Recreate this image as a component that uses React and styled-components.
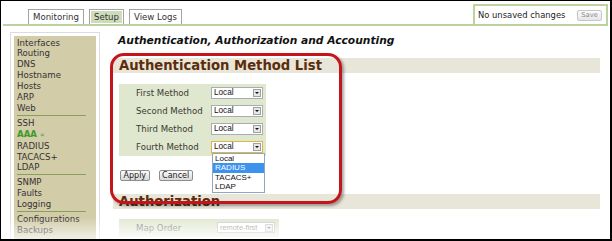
import React from "react";
import styled, { createGlobalStyle } from "styled-components";

const GlobalStyle = createGlobalStyle`
  html, body {
    margin: 0;
    padding: 0;
    background: #fff;
  }
`;

const Frame = styled.div`
  position: relative;
  width: 612px;
  height: 241px;
  box-sizing: border-box;
  border-style: solid;
  border-color: #000;
  border-width: 1px 2px 2px 1px;
  overflow: hidden;
  background: #fff;
  font-family: "DejaVu Sans", Verdana, sans-serif;
  color: #333;
`;

const TopBar = styled.div`
  display: flex;
  align-items: flex-end;
  height: 25px;
`;

const TabStrip = styled.div`
  flex: 1;
  display: flex;
  align-items: flex-end;
  gap: 5px;
  margin-left: 2px;
  padding-left: 25px;
  border-bottom: 2px solid #bcd2a0;
`;

const Tab = styled.div`
  height: 15px;
  box-sizing: border-box;
  padding: 0 4px;
  border: 1px solid #a3a3a3;
  border-bottom: none;
  box-shadow: inset 0 0 0 1px #fff;
  background: ${(p) => (p.$active ? "#cfdcbb" : "#fff")};
  font-size: 8.6px;
  line-height: 14px;
  color: #333;
`;

const StatusBox = styled.div`
  width: 135px;
  height: 22px;
  box-sizing: border-box;
  margin-right: 2px;
  border: 2px solid #bcd2a0;
  display: flex;
  align-items: center;
  justify-content: space-between;
  padding: 0 4px 0 3px;
  font-size: 8.4px;
  color: #222;
`;

const SaveButton = styled.div`
  width: 25px;
  height: 11px;
  box-sizing: border-box;
  border: 1px solid #c6c6c6;
  border-radius: 2px;
  background: linear-gradient(#fbfbfb, #e6e6e6);
  color: #8a8a8a;
  font-size: 6.8px;
  line-height: 9px;
  text-align: center;
`;

const Body = styled.div`
  display: flex;
  align-items: flex-start;
`;

const Sidebar = styled.div`
  flex-shrink: 0;
  width: 90px;
  height: 220px;
  box-sizing: border-box;
  margin: 6px 0 0 9px;
  padding: 3px 3px 0;
  border: 1px solid #dcdcdc;
`;

const SideInner = styled.div`
  height: 100%;
  background: #d2cca9;
  padding: 1.5px 0 0 3px;
`;

const SideGroup = styled.div`
  margin-right: 10px;
  padding-bottom: ${(p) => (p.$last ? 0 : 1)}px;
  margin-bottom: ${(p) => (p.$last ? 0 : 2)}px;
  border-bottom: ${(p) => (p.$last ? "none" : "1px solid #86a25a")};
`;

const SideItem = styled.div`
  font-size: 8.6px;
  line-height: 10.9px;
  white-space: nowrap;
  color: ${(p) => (p.$active ? "#3c9a2a" : "#333")};
  font-weight: ${(p) => (p.$active ? "bold" : "normal")};
`;

const Chevron = styled.span`
  font-size: 7.5px;
  margin-left: 3px;
  font-weight: normal;
`;

const Content = styled.div`
  width: 487px;
  margin-left: 13px;
`;

const PageTitle = styled.div`
  margin-top: 7.5px;
  padding-left: 5px;
  font-size: 10.7px;
  line-height: 14px;
  font-weight: bold;
  font-style: italic;
  color: #111;
  white-space: nowrap;
`;

const SectionBand = styled.div`
  margin-top: ${(p) => p.$top}px;
  height: 15px;
  padding-left: 6px;
  background: #e8e5d9;
  font-size: 13.2px;
  line-height: 15px;
  font-weight: bold;
  color: #5c2c0b;
  white-space: nowrap;
`;

const FormBox = styled.div`
  width: ${(p) => p.$width}px;
  box-sizing: border-box;
  margin: ${(p) => p.$top}px 0 0 6px;
  padding-left: 17px;
  background: ${(p) =>
    p.$faded ? "linear-gradient(#dfe7cf, #eef2e6)" : "#dfe7cf"};
`;

const Row = styled.div`
  display: flex;
  align-items: center;
  height: 18px;
`;

const Label = styled.div`
  width: ${(p) => p.$width}px;
  flex-shrink: 0;
  font-size: 8.6px;
  color: ${(p) => (p.$faded ? "#8e8e8e" : "#3a3a30")};
  white-space: nowrap;
`;

const SelectBox = styled.div`
  position: relative;
  width: ${(p) => p.$width}px;
  height: ${(p) => p.$height}px;
  box-sizing: border-box;
  display: flex;
  align-items: center;
  justify-content: space-between;
  padding-left: 2px;
  background: #fff;
  border: 1px solid ${(p) => (p.$focused ? "#e2b445" : p.$faded ? "#cfcfcf" : "#a7adb3")};
  font-family: "Liberation Sans", Arial, sans-serif;
  font-size: ${(p) => (p.$faded ? 7.4 : 8.2)}px;
  color: ${(p) => (p.$faded ? "#9c9c9c" : "#111")};
`;

const ArrowBox = styled.div`
  width: 8px;
  height: 8px;
  margin-right: 1px;
  box-sizing: border-box;
  border: 1px solid ${(p) => (p.$faded ? "#d0d0d0" : "#a0a0a0")};
  background: ${(p) => (p.$faded ? "#f0f0f0" : "#e6e6e6")};
  display: flex;
  align-items: center;
  justify-content: center;

  &::after {
    content: "";
    border-left: 2px solid transparent;
    border-right: 2px solid transparent;
    border-top: 2px solid ${(p) => (p.$faded ? "#999" : "#111")};
  }
`;

const OptionList = styled.div`
  position: absolute;
  top: 100%;
  left: 0;
  margin-top: 1px;
  width: 53px;
  box-sizing: border-box;
  border: 1px solid #8fa6c2;
  background: #fff;
  z-index: 2;
`;

const Option = styled.div`
  height: 9.5px;
  line-height: 9.5px;
  padding-left: 2px;
  font-family: "Liberation Sans", Arial, sans-serif;
  font-size: 8px;
  background: ${(p) => (p.$selected ? "#3b93ee" : "transparent")};
  color: ${(p) => (p.$selected ? "#fff" : "#111")};
`;

const ButtonRow = styled.div`
  display: flex;
  gap: 9px;
  margin: 14px 0 0 7px;
`;

const Button = styled.div`
  height: 11px;
  box-sizing: border-box;
  padding: 0 2.5px;
  border: 1px solid #8e8e8e;
  border-radius: 2px;
  background: linear-gradient(#fcfcfc, #d9d9d9);
  font-size: 8px;
  line-height: 9px;
  color: #222;
`;

const Annotation = styled.div`
  position: absolute;
  left: 109px;
  top: 51.5px;
  width: 232px;
  height: 151px;
  box-sizing: border-box;
  border: 3px solid #c3161c;
  border-radius: 14px;
  box-shadow: 2px 2px 3px rgba(0, 0, 0, 0.35);
  pointer-events: none;
  z-index: 3;
`;

const BottomFade = styled.div`
  position: absolute;
  left: 0;
  right: 0;
  bottom: 0;
  height: 22px;
  background: linear-gradient(rgba(255, 255, 255, 0), rgba(255, 255, 255, 0.7));
  pointer-events: none;
  z-index: 4;
`;

const sideGroups = [
  ["Interfaces", "Routing", "DNS", "Hostname", "Hosts", "ARP", "Web"],
  ["SSH", "AAA", "RADIUS", "TACACS+", "LDAP"],
  ["SNMP", "Faults", "Logging"],
  ["Configurations", "Backups"],
];

const methods = ["First Method", "Second Method", "Third Method", "Fourth Method"];
const options = ["Local", "RADIUS", "TACACS+", "LDAP"];

function Select({ value, width = 52, height = 12, focused, faded, open }) {
  return (
    <SelectBox $width={width} $height={height} $focused={focused} $faded={faded}>
      <span>{value}</span>
      <ArrowBox $faded={faded} />
      {open && (
        <OptionList>
          {options.map((o) => (
            <Option key={o} $selected={o === "RADIUS"}>
              {o}
            </Option>
          ))}
        </OptionList>
      )}
    </SelectBox>
  );
}

export default function App() {
  return (
    <>
      <GlobalStyle />
      <Frame>
        <TopBar>
          <TabStrip>
            <Tab>Monitoring</Tab>
            <Tab $active>Setup</Tab>
            <Tab>View Logs</Tab>
          </TabStrip>
          <StatusBox>
            <span>No unsaved changes</span>
            <SaveButton>Save</SaveButton>
          </StatusBox>
        </TopBar>
        <Body>
          <Sidebar>
            <SideInner>
              {sideGroups.map((g, i) => (
                <SideGroup key={i} $last={i === sideGroups.length - 1}>
                  {g.map((item) => (
                    <SideItem key={item} $active={item === "AAA"}>
                      {item}
                      {item === "AAA" && <Chevron>«</Chevron>}
                    </SideItem>
                  ))}
                </SideGroup>
              ))}
            </SideInner>
          </Sidebar>
          <Content>
            <PageTitle>Authentication, Authorization and Accounting</PageTitle>
            <SectionBand $top={10}>Authentication Method List</SectionBand>
            <FormBox $width={147} $top={11}>
              {methods.map((m, i) => (
                <Row key={m}>
                  <Label $width={75}>{m}</Label>
                  <Select value="Local" focused={i === 3} open={i === 3} />
                </Row>
              ))}
            </FormBox>
            <ButtonRow>
              <Button>Apply</Button>
              <Button>Cancel</Button>
            </ButtonRow>
            <SectionBand $top={13}>Authorization</SectionBand>
            <FormBox $width={160} $top={10} $faded>
              <Row>
                <Label $width={81} $faded>
                  Map Order
                </Label>
                <Select value="remote-first" width={58} height={11} faded />
              </Row>
            </FormBox>
          </Content>
        </Body>
        <Annotation />
        <BottomFade />
      </Frame>
    </>
  );
}
